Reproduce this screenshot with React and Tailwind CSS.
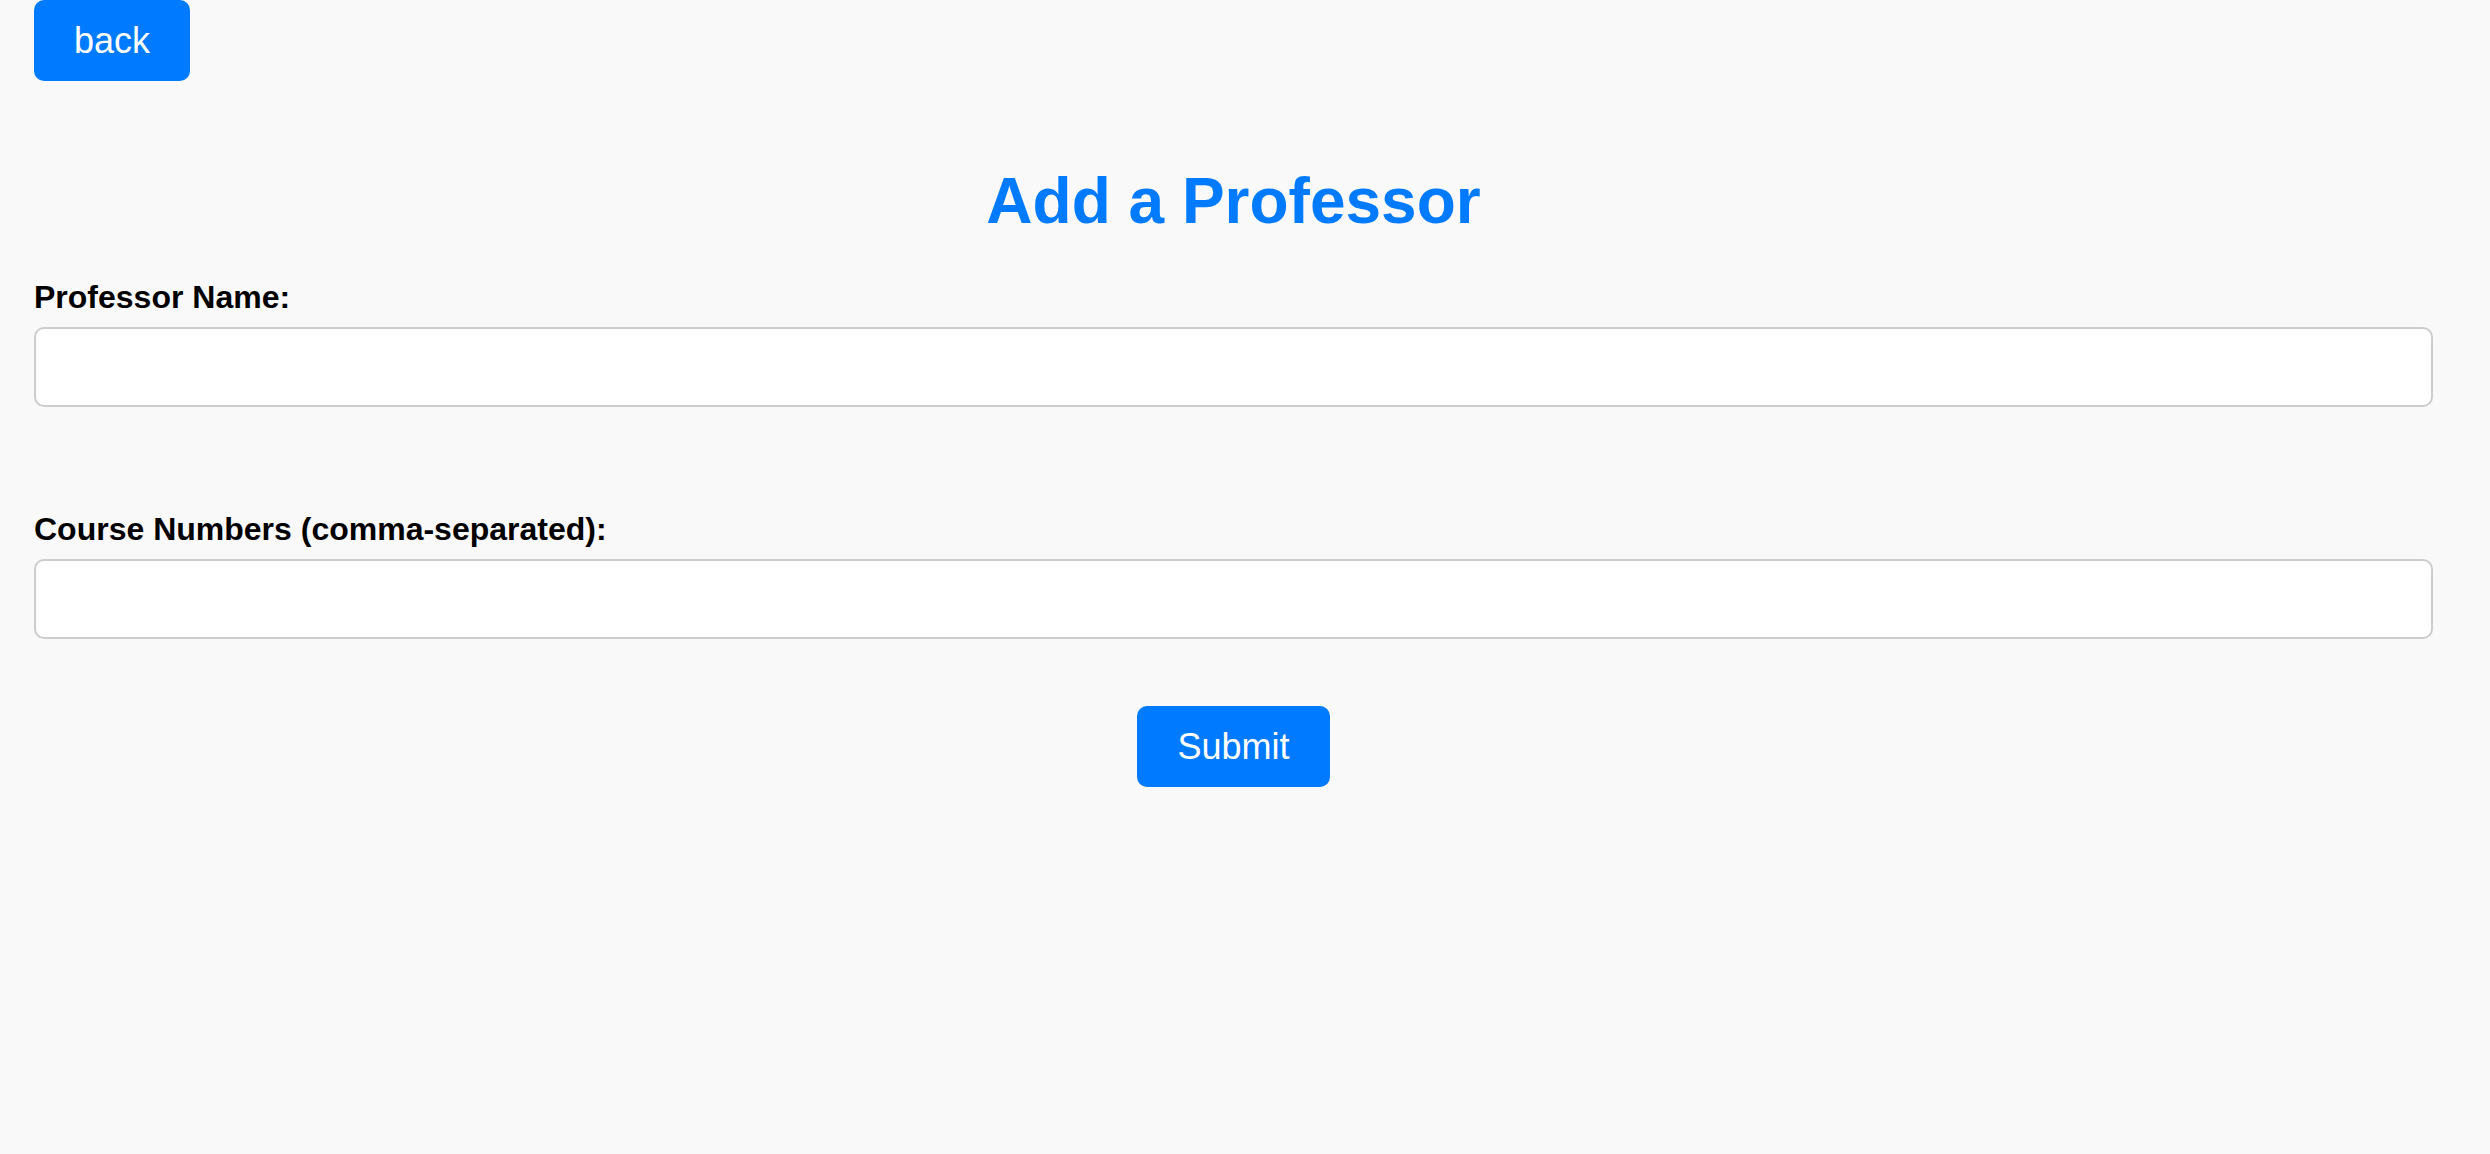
export default function App() {
  return (
    <div className="min-h-screen bg-[#f9f9f9] font-['Liberation_Sans',Arial,sans-serif]">
      <div className="ml-[34px] w-[2399px] flex flex-col">
        <div>
          <button className="bg-[#007bff] text-white text-[36px] leading-[41px] px-[40px] py-[20px] rounded-[10px]">
            back
          </button>
        </div>
        <h1 className="mt-[84px] text-center text-[64px] font-bold leading-[73px] text-[#007bff]">
          Add a Professor
        </h1>
        <label className="mt-[41px] block text-[32px] font-bold leading-[37px] text-black">
          Professor Name:
        </label>
        <input
          type="text"
          className="mt-[11px] h-[80px] w-full bg-white border-2 border-[#cccccc] rounded-[10px] px-[20px] text-[32px] outline-none"
        />
        <label className="mt-[104px] block text-[32px] font-bold leading-[37px] text-black">
          Course Numbers (comma-separated):
        </label>
        <input
          type="text"
          className="mt-[11px] h-[80px] w-full bg-white border-2 border-[#cccccc] rounded-[10px] px-[20px] text-[32px] outline-none"
        />
        <div className="mt-[67px] flex justify-center">
          <button className="bg-[#007bff] text-white text-[36px] leading-[41px] px-[40px] py-[20px] rounded-[10px]">
            Submit
          </button>
        </div>
      </div>
    </div>
  );
}
